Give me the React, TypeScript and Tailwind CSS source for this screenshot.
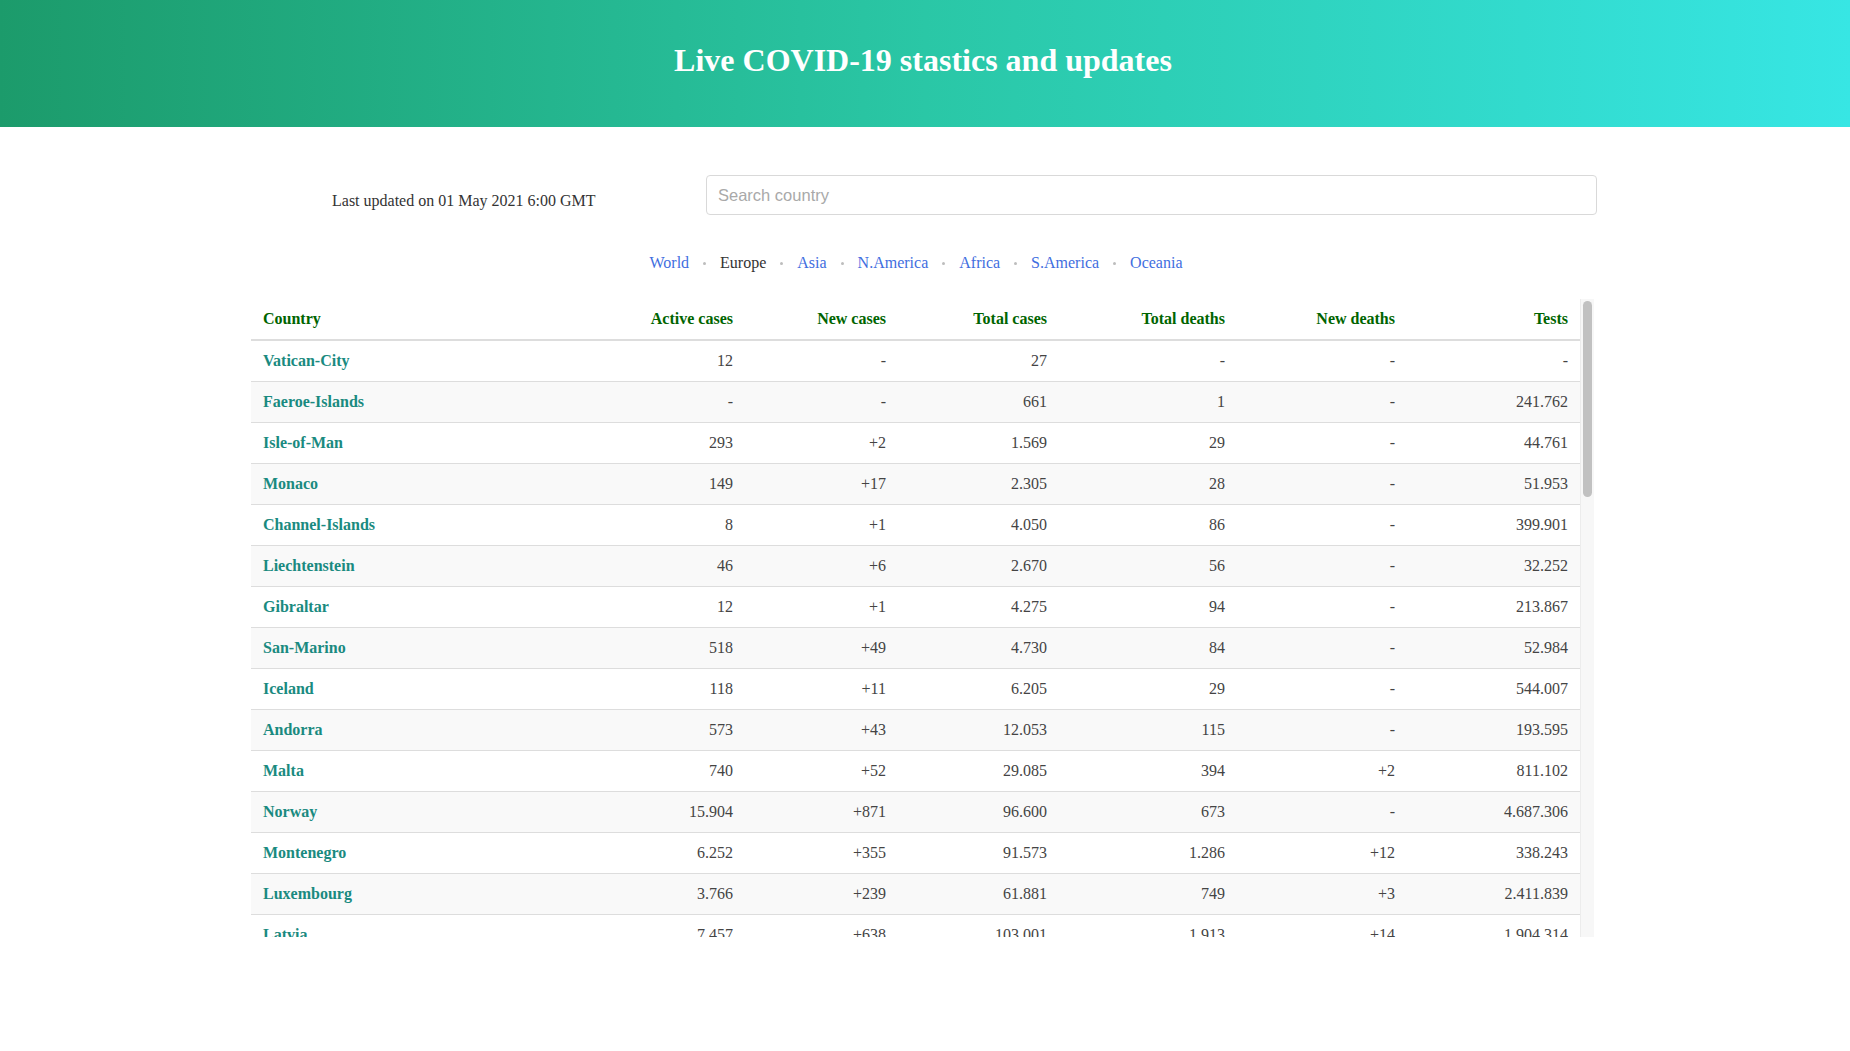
import React from "react";

type Row = [string, string, string, string, string, string, string];

const rows: Row[] = [
  ["Vatican-City", "12", "-", "27", "-", "-", "-"],
  ["Faeroe-Islands", "-", "-", "661", "1", "-", "241.762"],
  ["Isle-of-Man", "293", "+2", "1.569", "29", "-", "44.761"],
  ["Monaco", "149", "+17", "2.305", "28", "-", "51.953"],
  ["Channel-Islands", "8", "+1", "4.050", "86", "-", "399.901"],
  ["Liechtenstein", "46", "+6", "2.670", "56", "-", "32.252"],
  ["Gibraltar", "12", "+1", "4.275", "94", "-", "213.867"],
  ["San-Marino", "518", "+49", "4.730", "84", "-", "52.984"],
  ["Iceland", "118", "+11", "6.205", "29", "-", "544.007"],
  ["Andorra", "573", "+43", "12.053", "115", "-", "193.595"],
  ["Malta", "740", "+52", "29.085", "394", "+2", "811.102"],
  ["Norway", "15.904", "+871", "96.600", "673", "-", "4.687.306"],
  ["Montenegro", "6.252", "+355", "91.573", "1.286", "+12", "338.243"],
  ["Luxembourg", "3.766", "+239", "61.881", "749", "+3", "2.411.839"],
  ["Latvia", "7.457", "+638", "103.001", "1.913", "+14", "1.904.314"],
  ["Estonia", "9.871", "+412", "124.301", "1.183", "+6", "1.103.264"],
  ["Slovenia", "7.118", "+594", "236.874", "4.207", "+3", "1.098.411"],
  ["North-Macedonia", "11.442", "+298", "151.420", "4.832", "+21", "667.209"],
  ["Lithuania", "18.933", "+1.001", "242.150", "3.797", "+9", "3.416.002"],
  ["Bosnia-and-Herzegovina", "27.613", "+440", "198.540", "8.671", "+38", "902.117"],
  ["Albania", "22.017", "+111", "130.921", "2.381", "+4", "603.842"],
  ["Moldova", "6.845", "+230", "252.120", "5.852", "+19", "1.051.380"],
  ["Croatia", "10.943", "+1.556", "331.962", "7.115", "+31", "1.917.402"],
  ["Ireland", "22.013", "+400", "250.809", "4.896", "+2", "3.971.446"],
  ["Slovakia", "28.114", "+489", "381.421", "11.617", "+48", "2.861.735"],
  ["Finland", "36.471", "+299", "88.512", "920", "+1", "5.713.228"],
  ["Denmark", "8.301", "+895", "252.955", "2.488", "+1", "41.205.671"],
  ["Serbia", "56.331", "+1.417", "694.871", "6.218", "+25", "4.633.105"],
  ["Bulgaria", "53.710", "+761", "403.214", "16.331", "+51", "2.981.067"],
  ["Switzerland", "38.502", "+1.864", "657.881", "10.536", "+6", "6.213.448"],
  ["Austria", "17.220", "+1.437", "624.110", "10.222", "+22", "21.044.913"],
  ["Belarus", "4.613", "+1.138", "356.331", "2.535", "+8", "5.604.217"],
  ["Hungary", "226.901", "+1.429", "783.127", "27.172", "+119", "5.412.760"],
  ["Sweden", "889.014", "+5.511", "996.801", "14.000", "+7", "10.811.327"],
  ["Portugal", "23.571", "+398", "836.983", "16.974", "+3", "10.224.371"],
  ["Czechia", "38.022", "+2.075", "1.626.061", "29.321", "+55", "13.860.504"],
  ["Greece", "27.014", "+2.631", "345.447", "10.242", "+83", "8.112.004"],
  ["Belgium", "584.209", "+3.001", "992.702", "24.216", "+35", "12.911.802"],
  ["Netherlands", "1.454.812", "+6.899", "1.529.301", "17.339", "+12", "12.031.211"],
  ["Romania", "42.318", "+1.729", "1.060.150", "27.771", "+91", "7.011.228"],
  ["Poland", "295.431", "+5.431", "2.797.924", "67.502", "+293", "14.533.218"],
  ["Ukraine", "395.120", "+8.811", "2.105.419", "45.227", "+343", "10.604.108"],
  ["Spain", "178.341", "+5.251", "3.524.077", "78.216", "+136", "47.004.114"],
  ["Italy", "452.141", "+12.965", "4.022.653", "120.807", "+226", "60.611.221"],
  ["UK", "162.491", "+2.370", "4.414.242", "127.524", "+15", "159.108.320"],
  ["France", "4.893.103", "+24.299", "5.616.689", "104.675", "+161", "73.302.551"],
  ["Germany", "282.203", "+19.121", "3.404.752", "83.425", "+221", "55.132.097"],
  ["Russia", "262.151", "+8.926", "4.813.743", "110.368", "+375", "131.600.000"],
];

const continents = ["World", "Europe", "Asia", "N.America", "Africa", "S.America", "Oceania"];

const headers = ["Country", "Active cases", "New cases", "Total cases", "Total deaths", "New deaths", "Tests"];

export default function App() {
  return (
    <div className="min-h-[1051px] bg-white font-['Liberation_Serif',serif] text-[16px] leading-6 text-[#333]">
      <header className="h-[127px] bg-gradient-to-r from-[#1c9b6b] via-[#2ac7a6] to-[#37e6e4]">
        <h1 className="pr-[4px] pt-[42px] text-center text-[32px] font-bold leading-[37px] text-white">
          Live COVID-19 stastics and updates
        </h1>
      </header>

      <div className="mx-auto w-[1348px] pr-[2px]">
        <div className="mt-[48px] flex items-start">
          <div className="mt-[14px] w-[455px] pl-[81px] text-[#333]">Last updated on 01 May 2021 6:00 GMT</div>
          <input
            type="text"
            placeholder="Search country"
            className="h-[40px] flex-1 rounded-[4px] border border-[#d9d9d9] px-[11px] font-['Liberation_Sans',Arial,sans-serif] text-[16.5px] text-[#333] placeholder:text-[#a9a9a9] outline-none"
          />
        </div>

        <nav className="mt-[36px] flex items-center justify-center pr-[16px]">
          {continents.map((c, i) => (
            <React.Fragment key={c}>
              {i > 0 && <span className="mx-[14px] h-[3px] w-[3px] rounded-full bg-[#bdbdbd]" />}
              <span className={c === "Europe" ? "text-[#333]" : "text-[#3f6ee0]"}>{c}</span>
            </React.Fragment>
          ))}
        </nav>

        <div className="mt-[24px] flex h-[638px]">
          <div className="h-full w-[1329px] overflow-hidden">
            <table className="w-full table-fixed border-collapse">
              <colgroup>
                <col className="w-[309px]" />
                <col className="w-[185px]" />
                <col className="w-[153px]" />
                <col className="w-[161px]" />
                <col className="w-[178px]" />
                <col className="w-[170px]" />
                <col />
              </colgroup>
              <thead>
                <tr>
                  {headers.map((h, i) => (
                    <th
                      key={h}
                      className={`border-b-2 border-[#dddddd] px-3 py-2 font-bold text-[#006400] ${i === 0 ? "text-left" : "text-right"}`}
                    >
                      {h}
                    </th>
                  ))}
                </tr>
              </thead>
              <tbody>
                {rows.map((r, ri) => (
                  <tr key={r[0]} className={ri % 2 === 1 ? "bg-[#f9f9f9]" : "bg-white"}>
                    {r.map((v, ci) => (
                      <td
                        key={ci}
                        className={
                          ci === 0
                            ? "border-b border-[#dddddd] px-3 py-2 text-left font-bold text-[#1a8a80]"
                            : "border-b border-[#dddddd] px-3 py-2 text-right text-[#444]"
                        }
                      >
                        {v}
                      </td>
                    ))}
                  </tr>
                ))}
              </tbody>
            </table>
          </div>
          <div className="h-full w-[14px] border-l border-[#ececec] bg-[#f7f7f7]">
            <div className="mx-[2px] mt-[2px] h-[196px] rounded-full bg-[#c1c1c1]" />
          </div>
        </div>
      </div>
    </div>
  );
}
